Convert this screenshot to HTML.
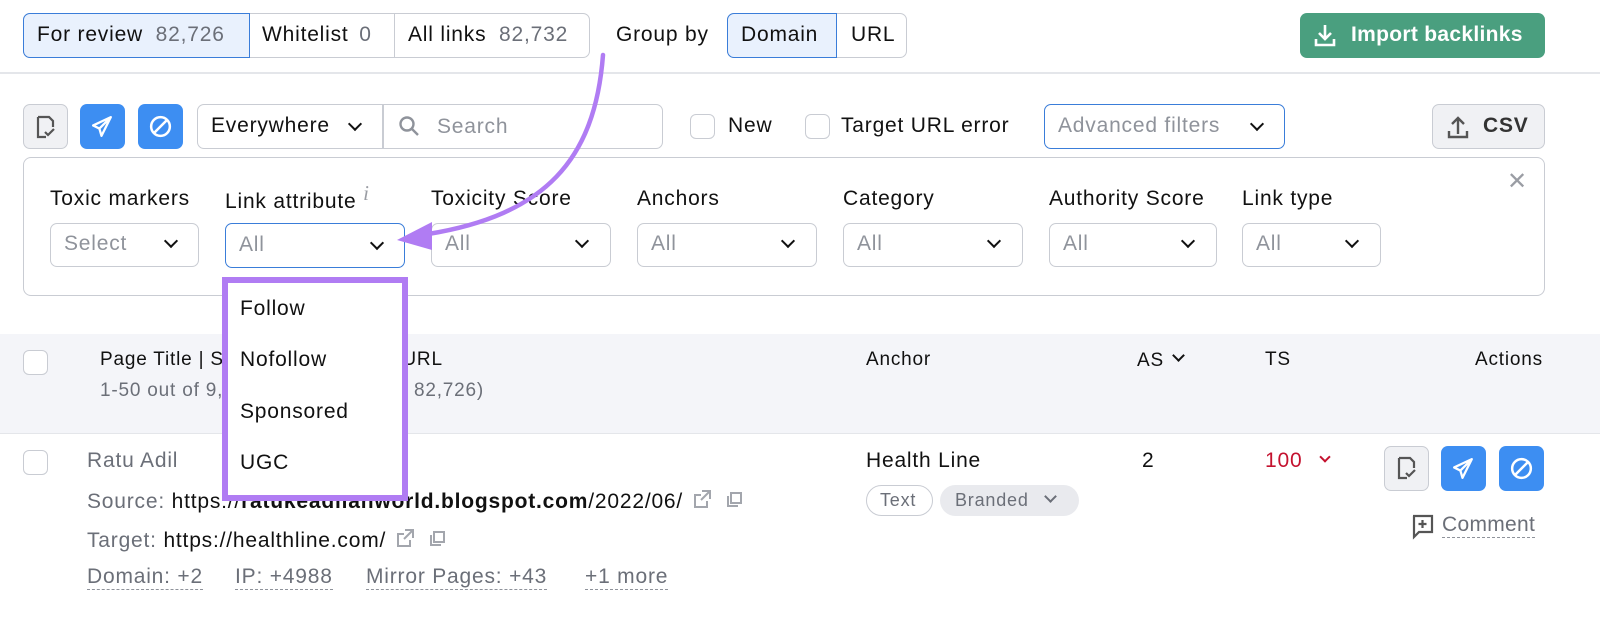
<!DOCTYPE html>
<html><head><meta charset="utf-8"><style>
*{box-sizing:border-box;margin:0;padding:0}
body{width:1600px;height:624px;background:#fff;font-family:"Liberation Sans",Arial,sans-serif;font-size:21px;letter-spacing:0.8px;color:#111;position:relative;overflow:hidden}
.a{position:absolute}
.box{position:absolute;border:1.5px solid #c9ccd3;border-radius:7px;background:#fff}
.t{position:absolute;white-space:nowrap;line-height:24px}
.g{color:#6b6f78}
.ph{color:#8f939b}
.chev{position:absolute;width:10px;height:10px;border-right:2.5px solid #111;border-bottom:2.5px solid #111;transform:rotate(45deg)}
.cb{position:absolute;width:25px;height:25px;border:1.5px solid #c9ccd3;border-radius:6px;background:#fff}
.dash{border-bottom:1.5px dashed #8f939b;padding-bottom:1px}
.bb{position:absolute;width:45px;height:45px;border-radius:7px;background:#3d8ef2}
.ic{vertical-align:-3px;margin-left:8px}
</style></head><body>
<!-- tabs -->
<div class="box" style="left:23px;top:13px;width:567px;height:45px"></div>
<div class="a" style="left:23px;top:13px;width:227px;height:45px;background:#e9f1fd;border:1.5px solid #3a7dd9;border-radius:7px 0 0 7px"></div>
<div class="a" style="left:394px;top:14px;width:1px;height:43px;background:#c9ccd3"></div>
<div class="t" style="left:37px;top:23px">For review <span class="g" style="margin-left:6px">82,726</span></div>
<div class="t" style="left:262px;top:23px">Whitelist <span class="g" style="margin-left:4px">0</span></div>
<div class="t" style="left:408px;top:23px">All links <span class="g" style="margin-left:6px">82,732</span></div>
<div class="t" style="left:616px;top:23px">Group by</div>
<div class="box" style="left:727px;top:13px;width:180px;height:45px"></div>
<div class="a" style="left:727px;top:13px;width:110px;height:45px;background:#e9f1fd;border:1.5px solid #3a7dd9;border-radius:7px 0 0 7px"></div>
<div class="t" style="left:741px;top:23px">Domain</div>
<div class="t" style="left:851px;top:23px">URL</div>
<div class="a" style="left:1300px;top:13px;width:245px;height:45px;background:#4a9f7f;border-radius:7px"></div>
<svg class="a" style="left:1312px;top:22px" width="26" height="26" viewBox="0 0 26 26" fill="none" stroke="#fff" stroke-width="2.6"><path d="M13 3v13M7 11l6 6 6-6M4 17v6h18v-6"/></svg>
<div class="t" style="left:1351px;top:23px;color:#fff;font-weight:bold;letter-spacing:0.3px">Import backlinks</div>
<div class="a" style="left:0;top:72px;width:1600px;height:1.5px;background:#e4e6ea"></div>
<!-- toolbar -->
<div class="a" style="left:23px;top:104px;width:45px;height:45px;background:#f0f1f4;border:1.5px solid #c9ccd3;border-radius:7px"></div>
<svg class="a" style="left:33px;top:114px" width="26" height="26" viewBox="0 0 26 26" fill="none" stroke="#555" stroke-width="2.2"><path d="M5 3h11l4 4v6M5 3v20h8M12 18l3 3 6-6"/></svg>
<div class="bb" style="left:80px;top:104px"></div>
<svg class="a" style="left:89px;top:113px" width="27" height="27" viewBox="0 0 26 26" fill="none" stroke="#fff" stroke-width="2.2" stroke-linejoin="round"><path d="M21 4L4 12l6 3 2 7zM10 15l11-11"/></svg>
<div class="bb" style="left:138px;top:104px"></div>
<svg class="a" style="left:147px;top:113px" width="27" height="27" viewBox="0 0 26 26" fill="none" stroke="#fff" stroke-width="2.4"><circle cx="13" cy="13" r="9"/><path d="M7 19L19 7"/></svg>
<div class="box" style="left:197px;top:104px;width:466px;height:45px"></div>
<div class="a" style="left:382px;top:105px;width:1.5px;height:43px;background:#c9ccd3"></div>
<div class="t" style="left:211px;top:114px">Everywhere</div>
<div class="chev" style="left:350px;top:119px"></div>
<svg class="a" style="left:397px;top:114px" width="24" height="24" viewBox="0 0 24 24" fill="none" stroke="#8f939b" stroke-width="2.4"><circle cx="10" cy="10" r="6.5"/><path d="M15 15l6 6"/></svg>
<div class="t ph" style="left:437px;top:115px">Search</div>
<div class="cb" style="left:690px;top:114px"></div>
<div class="t" style="left:728px;top:114px">New</div>
<div class="cb" style="left:805px;top:114px"></div>
<div class="t" style="left:841px;top:114px">Target URL error</div>
<div class="a" style="left:1044px;top:104px;width:241px;height:45px;border:1.5px solid #3a7dd9;border-radius:7px"></div>
<div class="t ph" style="left:1058px;top:114px">Advanced filters</div>
<div class="chev" style="left:1252px;top:119px"></div>
<div class="a" style="left:1432px;top:104px;width:113px;height:45px;background:#f0f1f4;border:1.5px solid #c9ccd3;border-radius:7px"></div>
<svg class="a" style="left:1445px;top:114px" width="26" height="26" viewBox="0 0 26 26" fill="none" stroke="#555" stroke-width="2.4"><path d="M13 20V5M7 10l6-6 6 6M4 17v6h18v-6"/></svg>
<div class="t" style="left:1483px;top:114px;color:#333;font-weight:bold">CSV</div>
<!-- filter panel -->
<div class="a" style="left:23px;top:157px;width:1522px;height:139px;border:1.5px solid #c9ccd3;border-radius:8px"></div>
<div class="t" style="left:1507px;top:170px;color:#9a9da4;font-size:24px">✕</div>
<div class="t" style="left:50px;top:187px">Toxic markers</div>
<div class="t" style="left:225px;top:189px">Link attribute <span style="color:#9a9da4;font-style:italic;font-family:'Liberation Serif';position:relative;top:-8px">i</span></div>
<div class="t" style="left:431px;top:187px">Toxicity Score</div>
<div class="t" style="left:637px;top:187px">Anchors</div>
<div class="t" style="left:843px;top:187px">Category</div>
<div class="t" style="left:1049px;top:187px">Authority Score</div>
<div class="t" style="left:1242px;top:187px">Link type</div>
<div class="box" style="left:50px;top:223px;width:149px;height:44px"></div><div class="t ph" style="left:64px;top:232px">Select</div><div class="chev" style="left:166px;top:236px"></div>
<div class="a" style="left:225px;top:223px;width:180px;height:45px;border:1.5px solid #3a7dd9;border-radius:7px"></div><div class="t ph" style="left:239px;top:233px">All</div><div class="chev" style="left:372px;top:238px"></div>
<div class="box" style="left:431px;top:223px;width:180px;height:44px"></div><div class="t ph" style="left:445px;top:232px">All</div><div class="chev" style="left:577px;top:236px"></div>
<div class="box" style="left:637px;top:223px;width:180px;height:44px"></div><div class="t ph" style="left:651px;top:232px">All</div><div class="chev" style="left:783px;top:236px"></div>
<div class="box" style="left:843px;top:223px;width:180px;height:44px"></div><div class="t ph" style="left:857px;top:232px">All</div><div class="chev" style="left:989px;top:236px"></div>
<div class="box" style="left:1049px;top:223px;width:168px;height:44px"></div><div class="t ph" style="left:1063px;top:232px">All</div><div class="chev" style="left:1183px;top:236px"></div>
<div class="box" style="left:1242px;top:223px;width:139px;height:44px"></div><div class="t ph" style="left:1256px;top:232px">All</div><div class="chev" style="left:1347px;top:236px"></div>
<!-- table header -->
<div class="a" style="left:0;top:334px;width:1600px;height:100px;background:#f4f5f9;border-bottom:1.5px solid #e4e6ea"></div>
<div class="cb" style="left:23px;top:350px"></div>
<div class="t" style="left:100px;top:348px;font-size:19px">Page Title | Source URL | Target URL</div>
<div class="t g" style="left:100px;top:379px;font-size:19px">1-50 out of 9,512 (total backlinks: 82,726)</div>
<div class="t" style="left:866px;top:348px;font-size:19px">Anchor</div>
<div class="t" style="left:1137px;top:349px;font-size:19px">AS</div><div class="chev" style="left:1174px;top:351px;width:9px;height:9px"></div>
<div class="t" style="left:1265px;top:348px;font-size:19px">TS</div>
<div class="t" style="left:1475px;top:348px;font-size:19px">Actions</div>
<!-- row -->
<div class="cb" style="left:23px;top:450px"></div>
<div class="t g" style="left:87px;top:449px">Ratu Adil</div>
<div class="t" style="left:87px;top:487px"><span class="g">Source:</span> https://<b>ratukeadilanworld.blogspot.com</b>/2022/06/<svg class="ic" width="54" height="24" viewBox="0 0 54 24" fill="none" stroke="#a3a6ad" stroke-width="2"><path d="M11 4h8v8M19 4l-9 9M16 14v6H4V8h6"/><path d="M40 6h10v10H40zM37 9v10h10"/></svg></div>
<div class="t" style="left:87px;top:526px"><span class="g">Target:</span> https://healthline.com/<svg class="ic" width="54" height="24" viewBox="0 0 54 24" fill="none" stroke="#a3a6ad" stroke-width="2"><path d="M11 4h8v8M19 4l-9 9M16 14v6H4V8h6"/><path d="M40 6h10v10H40zM37 9v10h10"/></svg></div>
<div class="t g" style="left:87px;top:565px"><span class="dash">Domain: +2</span></div>
<div class="t g" style="left:235px;top:565px"><span class="dash">IP: +4988</span></div>
<div class="t g" style="left:366px;top:565px"><span class="dash">Mirror Pages: +43</span></div>
<div class="t g" style="left:585px;top:565px"><span class="dash">+1 more</span></div>
<div class="t" style="left:866px;top:449px">Health Line</div>
<div class="a" style="left:866px;top:485px;width:67px;height:31px;border:1.5px solid #c9ccd3;border-radius:16px"></div>
<div class="t g" style="left:880px;top:488px;font-size:18px">Text</div>
<div class="a" style="left:940px;top:485px;width:139px;height:31px;background:#e9eaee;border-radius:16px"></div>
<div class="t g" style="left:955px;top:488px;font-size:18px">Branded</div>
<div class="chev" style="left:1046px;top:492px;width:9px;height:9px;border-color:#6b6f78"></div>
<div class="t" style="left:1142px;top:449px">2</div>
<div class="t" style="left:1265px;top:449px;color:#c4122f">100</div>
<div class="chev" style="left:1321px;top:453px;width:8px;height:8px;border-color:#c4122f;border-width:2px"></div>
<div class="a" style="left:1384px;top:446px;width:45px;height:45px;background:#f0f1f4;border:1.5px solid #c9ccd3;border-radius:7px"></div>
<svg class="a" style="left:1394px;top:455px" width="26" height="26" viewBox="0 0 26 26" fill="none" stroke="#555" stroke-width="2.2"><path d="M5 3h11l4 4v6M5 3v20h8M12 18l3 3 6-6"/></svg>
<div class="bb" style="left:1441px;top:446px"></div>
<svg class="a" style="left:1450px;top:455px" width="27" height="27" viewBox="0 0 26 26" fill="none" stroke="#fff" stroke-width="2.2" stroke-linejoin="round"><path d="M21 4L4 12l6 3 2 7zM10 15l11-11"/></svg>
<div class="bb" style="left:1499px;top:446px"></div>
<svg class="a" style="left:1508px;top:455px" width="27" height="27" viewBox="0 0 26 26" fill="none" stroke="#fff" stroke-width="2.4"><circle cx="13" cy="13" r="9"/><path d="M7 19L19 7"/></svg>
<svg class="a" style="left:1410px;top:513px" width="26" height="28" viewBox="0 0 26 28" fill="none" stroke="#555" stroke-width="2.2"><path d="M3 3h19v16H9l-5 5V3zM12.5 7v8M8.5 11h8"/></svg>
<div class="t g" style="left:1442px;top:513px;letter-spacing:0.3px"><span class="dash">Comment</span></div>
<!-- dropdown -->
<div class="a" style="left:222px;top:277px;width:186px;height:224px;background:#fff;border:6px solid #b07cf3"></div>
<div class="t" style="left:240px;top:297px">Follow</div>
<div class="t" style="left:240px;top:348px">Nofollow</div>
<div class="t" style="left:240px;top:400px">Sponsored</div>
<div class="t" style="left:240px;top:451px">UGC</div>
<!-- arrow -->
<svg class="a" style="left:0;top:0" width="1600" height="624" fill="none"><path d="M603 55 C 595 160 545 215 428 234" stroke="#b07cf3" stroke-width="4.5" stroke-linecap="round"/><path d="M397 240 L432 222 L432 250 Z" fill="#b07cf3"/></svg>
</body></html>
